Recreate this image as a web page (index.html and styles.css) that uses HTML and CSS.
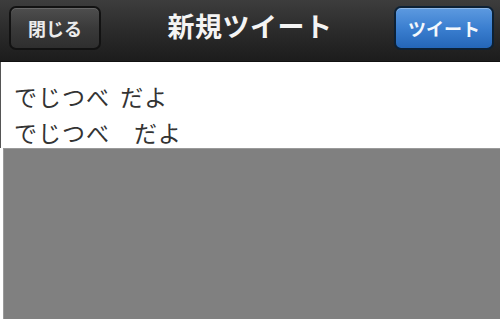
FILE: index.html
```html
<!DOCTYPE html>
<html lang="ja">
<head>
  <meta charset="UTF-8">
  <title>新規ツイート</title>
  <link rel="stylesheet" href="styles.css">
</head>
<body>

<div class="navbar">
  <button class="nav-btn close-btn">閉じる</button>
  <div class="nav-title">新規ツイート</div>
  <button class="nav-btn tweet-btn">ツイート</button>
</div>

<div class="compose">
  <div class="line">でじつべ だよ</div>
  <div class="line">でじつべ　だよ</div>
</div>

<div class="keyboard-area"></div>

</body>
</html>
```

FILE: styles.css
```css
body {
  margin: 0;
  width: 500px;
  height: 319px;
  overflow: hidden;
  font-family: "Noto Sans CJK JP", "Noto Sans", sans-serif;
  background: #fff;
  display: flex;
  flex-direction: column;
}

.navbar {
  height: 62px;
  flex: none;
  display: flex;
  align-items: center;
  justify-content: space-between;
  padding: 0 6px 6px 9px;
  box-sizing: border-box;
  background: linear-gradient(to bottom, #3d3d3d 0%, #2b2b2b 50%, #1c1c1c 100%);
  border-bottom: 1px solid #111;
  position: relative;
}

.nav-title {
  position: absolute;
  left: 0;
  right: 0;
  top: 6px;
  text-align: center;
  color: #f4f4f4;
  font-size: 27px;
  font-weight: bold;
  letter-spacing: 0.5px;
  line-height: 40px;
  pointer-events: none;
}

.nav-btn {
  height: 44px;
  border-radius: 7px;
  font-family: inherit;
  font-size: 18px;
  font-weight: bold;
  padding: 0;
  color: #ececec;
  line-height: 1;
}

.close-btn {
  width: 92px;
  border: 2px solid #121212;
  background: linear-gradient(to bottom, #4e4e4e 0%, #3a3a3a 50%, #2e2e2e 100%);
  box-shadow: inset 0 1px 0 rgba(255,255,255,0.15);
}

.tweet-btn {
  width: 100px;
  border: 2px solid #0d2135;
  color: #f4f8fc;
  background: linear-gradient(to bottom, #5d9ae0 0%, #3b7fd0 50%, #2466b8 100%);
  box-shadow: inset 0 1px 0 rgba(255,255,255,0.3);
}

.compose {
  flex: none;
  height: 86px;
  padding: 16px 0 0 13px;
  box-sizing: border-box;
  border-left: 1px solid #555;
  color: #333;
  font-size: 23px;
  letter-spacing: 1px;
  word-spacing: 4px;
  line-height: 36px;
  background: #fff;
}

.line {
  height: 36px;
}

.keyboard-area {
  flex: 1;
  margin-left: 3px;
  background: #808080;
  border-top: 1px solid #9a9a9a;
  border-left: 1px solid #9a9a9a;
}
```
